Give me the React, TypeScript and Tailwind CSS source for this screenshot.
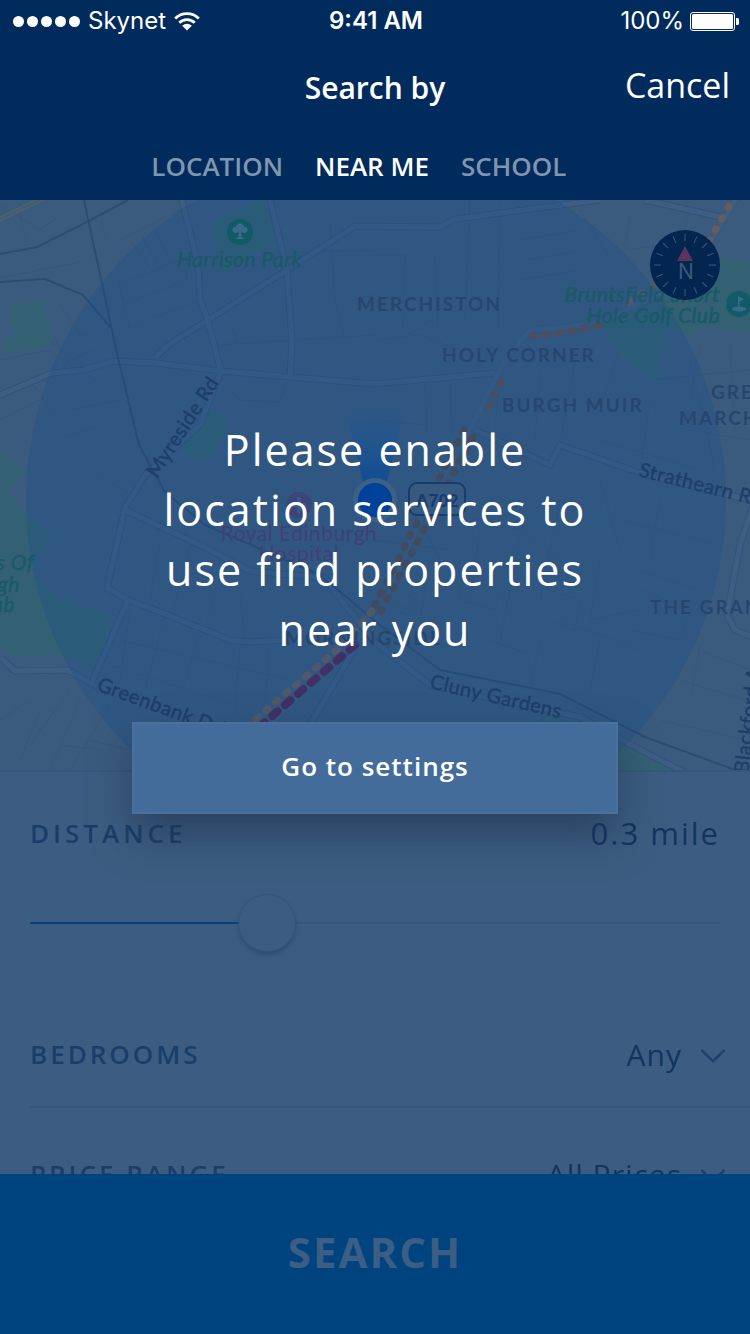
import React, { useState } from "react";

const ROADS = [
  "M182 200L198 265L200 300L207 318L221 371",
  "M0 395L52 373L83 370L115 361L155 363L221 371L290 377L375 384L495 373",
  "M155 358L168 345L208 320L287 270L355 226L440 227L455 219L600 200",
  "M270 200L287 270L292 342L290 377",
  "M221 371L200 425L145 475L125 508L107 588L128 600L92 682",
  "M125 510L200 545L250 571L325 578L345 605L375 642L430 685L500 700L580 717L650 755L690 775",
  "M128 600L160 612L230 640L248 642L290 640",
  "M0 657L15 671L68 670L92 684L110 692",
  "M475 430L550 465L560 445L640 473L750 500",
  "M645 200L725 218",
  "M755 500L740 545L727 615L735 630L755 638",
  "M355 648L310 725L285 770",
];

const MAIN_ROAD =
  "M738 196L702 255L655 297L600 322L560 328L530 330L505 360L472 425L420 520L378 618L255 740";

const RAILWAYS = [
  "M84 200L90 228L118 358L139 445L165 492L205 525L320 575L380 625L440 670L560 694L645 737L735 770",
  "M0 254L37 247L83 224L128 200",
  "M0 282L45 279L83 295L111 328",
];

const STREETS = [
  "M118 285L180 260M122 305L187 280M127 328L200 300M118 280L130 330M180 245L187 280M130 240L150 268M142 236L158 264M155 230L170 262",
  "M0 278L80 262M0 205L40 230L60 215M20 210L25 240M100 210L105 240M120 240L190 205M60 305L80 335L95 330M50 340L70 360L95 350",
  "M221 345L292 340M292 340L375 335M230 325L238 340L225 345M330 220L335 300L345 340M300 252L375 250M350 300L375 295",
  "M230 390L240 400L280 402L288 380M70 410L120 400M60 440L110 420M90 470L140 500M0 420L40 400M30 380L55 415",
  "M405 255L403 330M435 255L438 330M470 200L465 320M500 205L498 330M405 255L375 255M520 240L580 230M525 260L575 252M520 280L580 270",
  "M375 340L420 335L460 350M400 340L430 320L455 345M425 385L427 435M450 380L452 435M375 420L425 425",
  "M500 375L495 430L530 450M540 370L535 440M575 360L560 445M620 350L600 410L575 440M580 400L650 420M650 400L640 470M600 440L700 470M690 360L715 470",
  "M160 540L150 600M190 545L175 605M225 560L205 630M130 610L120 680M165 615L145 690M200 630L180 700M240 645L235 715M270 645L265 700M120 640L290 680M110 665L250 710",
  "M240 595L245 640M200 520L300 500M375 540L450 550M400 500L520 530L560 560M430 560L420 620M480 530L470 600M520 540L500 640M560 500L540 600M600 480L620 550",
  "M460 580L500 590L495 610L460 600ZM550 590L580 600L575 630L545 620M600 560L590 620L640 610M640 590L690 610L680 640L630 630M560 620L640 650M540 640L530 690",
  "M400 590L416 600L410 615L395 612M490 640L530 655M600 640L590 690M640 570L700 590M620 520L720 545M660 500L650 560M700 650L750 670M680 680L745 700M660 720L745 740M700 645L690 700",
  "M0 690L50 740M20 680L60 720M40 710L20 760M70 690L30 745M60 745L100 750M80 700L50 770M110 705L70 770M90 740L130 750M0 720L30 700",
  "M580 210L610 260M630 215L625 250L660 245M690 205L680 250M650 380L750 370M700 345L690 400M690 430L750 440M730 340L735 430",
  "M0 360L50 350L110 390M55 335L65 370M180 200L190 240M390 600L470 640M420 520L440 560",
];

const TICKS = Array.from({ length: 16 }, (_, i) => i * 22.5);

function CityMap() {
  return (
    <svg
      className="h-[570px] w-full"
      viewBox="0 200 750 570"
      preserveAspectRatio="xMidYMin slice"
      role="img"
      aria-label="Map of the area around you"
      fontFamily="Lato, sans-serif"
    >
      <defs>
        <linearGradient id="heading" x1="0" y1="0" x2="0" y2="1">
          <stop offset="0" stopColor="#1554a0" stopOpacity="0" />
          <stop offset="1" stopColor="#074a98" stopOpacity="0.8" />
        </linearGradient>
      </defs>
      <rect x="0" y="200" width="750" height="570" fill="#3b5b7e" />

      <g fill="none" stroke="#35567b" strokeWidth="1" opacity="0.7">
        {STREETS.map((d) => (
          <path key={d} d={d} />
        ))}
      </g>

      <g fill="#336173">
        <path d="M210 222L268 198L276 243L240 260L222 277Z" />
        <path d="M8 307L43 299L52 335L50 343L30 350L5 354L4 340L16 335Z" />
        <path d="M203 405L231 419L220 445L203 461L183 450Z" />
        <path d="M0 450L24 470L10 490L18 507L50 532L32 575L60 597L112 617L97 668L60 655L10 656L0 650Z" />
        <path d="M600 325L720 255L750 263L750 332L710 328L690 335L668 330L656 382L620 355Z" />
        <path d="M535 722L550 716L590 727L672 772L620 772Z" />
      </g>

      <g fill="none" strokeLinejoin="round">
        {ROADS.map((d) => (
          <path key={d} d={d} stroke="#33537a" strokeWidth="7" />
        ))}
        <path d={MAIN_ROAD} stroke="#3a5872" strokeWidth="7" />
        {ROADS.map((d) => (
          <path key={d} d={d} stroke="#3e5e84" strokeWidth="5" />
        ))}
        <path d={MAIN_ROAD} stroke="#3d5e84" strokeWidth="5" />
        <path d="M-2 220L48 196" stroke="#4d6464" strokeWidth="5" />
        <path d="M-2 220L48 196" stroke="#3f5d80" strokeWidth="2" />
        {RAILWAYS.map((d) => (
          <path key={d} d={d} stroke="#2d4c74" strokeWidth="2" />
        ))}
      </g>

      <circle cx="376" cy="500" r="350" fill="#145089" fillOpacity="0.28" />

      <g fill="none" strokeLinecap="round" strokeWidth="7">
        <path d="M729 206L709 241" stroke="#665b60" strokeDasharray="2 11" />
        <path d="M655 284L625 306" stroke="#54566a" strokeDasharray="2 13" />
        <path d="M532 336L560 333L602 325" stroke="#4b4e60" strokeDasharray="3 10" />
        <path d="M501 382L488 408" stroke="#4b4e60" strokeDasharray="2 11" />
        <path d="M464 430L372 611" stroke="#424b5e" strokeDasharray="2 11" />
        <path d="M473 437L376 620" stroke="#424b5e" strokeDasharray="2 11" />
        <path d="M372 611L346 642L250 724" stroke="#505869" strokeDasharray="3 10" />
        <path d="M355 645L264 723" stroke="#422f66" strokeWidth="8" strokeDasharray="7 10" />
      </g>

      <g fill="#27466f" fontSize="19" fontWeight="700" letterSpacing="2">
        <text x="357" y="311">MERCHISTON</text>
        <text x="442" y="362">HOLY CORNER</text>
        <text x="502" y="412">BURGH MUIR</text>
        <text x="711" y="399">GREEN</text>
        <text x="679" y="425">MARCHMONT</text>
        <text x="650" y="614">THE GRANGE</text>
        <text x="285" y="645">MORNINGSIDE</text>
      </g>
      <g fill="#1e3e69" stroke="#1e3e69" strokeWidth="0.4" fontSize="20" letterSpacing="0.5">
        <text transform="translate(157 479) rotate(-57)">Myreside Rd</text>
        <text transform="translate(96 690) rotate(20)">Greenbank Drive</text>
        <text transform="translate(638 476) rotate(14)">Strathearn Road</text>
        <text transform="translate(429 688) rotate(13)">Cluny Gardens</text>
        <text transform="translate(748 774) rotate(-83)">Blackford Ave</text>
      </g>
      <g fill="#195968" stroke="#195968" strokeWidth="0.5" fontSize="21" fontStyle="italic" letterSpacing="0.5">
        <text x="177" y="267">Harrison Park</text>
        <text x="720" y="302" textAnchor="end">Bruntsfield Short</text>
        <text x="720" y="323" textAnchor="end">Hole Golf Club</text>
        <text x="34" y="570" textAnchor="end">Merchants Of</text>
        <text x="20" y="592" textAnchor="end">Edinburgh</text>
        <text x="15" y="612" textAnchor="end">Golf Club</text>
      </g>
      <g fill="#423f74" fontSize="21" letterSpacing="0.5" textAnchor="middle">
        <text x="299" y="541">Royal Edinburgh</text>
        <text x="299" y="561">Hospital</text>
      </g>

      <circle cx="240" cy="232" r="13" fill="#135a68" />
      <g fill="#3c6a8a">
        <circle cx="240" cy="228" r="4.5" />
        <circle cx="235.500" cy="230" r="3" />
        <circle cx="244.500" cy="230" r="3" />
        <path d="M239 230h2l.5 7l3.500 2h-10l3.500-2z" />
      </g>

      <circle cx="739" cy="304" r="13" fill="#135a68" />
      <g fill="#3c6a8a">
        <ellipse cx="739" cy="309" rx="7" ry="2.500" />
        <path d="M738 296l6 3l-4.500 3v7h-1.500z" />
      </g>

      <circle cx="299" cy="505" r="13" fill="#3c447a" />
      <path d="M297 497h4v6h5v4h-5v6h-4v-6h-5v-4h5z" fill="#36588a" />

      <path d="M345 408Q375 398 405 408L386 486H364Z" fill="url(#heading)" />
      <circle cx="375" cy="500" r="22" fill="#3d6085" />
      <circle cx="375" cy="500" r="17" fill="#00429a" />

      <rect x="409" y="483" width="56" height="32" rx="8" fill="#38597f" stroke="#183c6f" strokeWidth="2" />
      <text
        x="437"
        y="507"
        textAnchor="middle"
        fontFamily="'Liberation Sans', sans-serif"
        fontSize="18"
        fontWeight="700"
        fill="#183c6f"
      >
        A702
      </text>
    </svg>
  );
}

function Compass() {
  return (
    <button type="button" aria-label="Point the map north" className="absolute top-[30px] right-[30px] size-[70px]">
      <svg viewBox="0 0 70 70" className="size-full">
        <circle cx="35" cy="35" r="35" fill="#02264f" />
        {TICKS.map((angle) => (
          <path key={angle} d="M35 4V11" stroke="#3b587e" transform={`rotate(${angle} 35 35)`} />
        ))}
        <path d="M35 16L43 31H27Z" fill="#5a345f" />
        <text x="36" y="49" textAnchor="middle" fontFamily="Inter, sans-serif" fontSize="21" fill="#3b587e">
          N
        </text>
      </svg>
    </button>
  );
}

function StatusBar() {
  return (
    <div className="grid h-[42px] grid-cols-[1fr_auto_1fr] items-center pr-[11px] pl-[13px] font-['Inter',sans-serif] text-[24px]">
      <div className="flex items-center">
        <div className="flex gap-[3px]">
          {[1, 2, 3, 4, 5].map((n) => (
            <span key={n} className="size-[11px] rounded-full bg-white" />
          ))}
        </div>
        <span className="ml-2">Skynet</span>
        <svg viewBox="0 0 26 19" className="ml-2 h-[19px] w-[26px]" role="img" aria-label="Wi-Fi">
          <path
            d="M1.200 6.500a16.700 16.700 0 0 1 23.600 0M5.300 10.800a10.900 10.900 0 0 1 15.400 0"
            fill="none"
            stroke="white"
            strokeWidth="2.900"
          />
          <path d="M8.200 13.700a6.800 6.800 0 0 1 9.600 0L13 18.500z" fill="white" />
        </svg>
      </div>
      <span className="font-semibold">9:41 AM</span>
      <div className="flex items-center justify-end gap-[6px]">
        <span>100%</span>
        <svg viewBox="0 0 49 19" className="h-[19px] w-[49px]" role="img" aria-label="Battery full">
          <rect x="0.500" y="0.500" width="44" height="18" rx="2.500" fill="none" stroke="white" />
          <rect x="2" y="2" width="41" height="15" rx="1.500" fill="white" />
          <path d="M46 6h1.500q1.500 0 1.500 1.500v4q0 1.500-1.500 1.500H46z" fill="white" />
        </svg>
      </div>
    </div>
  );
}

function Chevron() {
  return (
    <svg viewBox="0 0 26 18" className="pointer-events-none absolute right-6 h-[18px] w-[26px]" aria-hidden="true">
      <path d="M1.500 5L13 16.200L24.500 5" fill="none" stroke="#1f426c" strokeWidth="2.600" />
    </svg>
  );
}

function SelectRow({ id, label, option }: { id: string; label: string; option: string }) {
  return (
    <div className="ml-[30px] flex h-[120px] shrink-0 items-center justify-between border-b-2 border-[#35567d] pt-[14px]">
      <label htmlFor={id} className="text-[26px] font-semibold tracking-[3px] text-[#1a3e69]">
        {label}
      </label>
      <div className="relative flex items-center">
        <select
          id={id}
          className="appearance-none bg-transparent pr-[68px] text-right text-[30px] tracking-[1px] text-[#12345f]"
        >
          <option>{option}</option>
        </select>
        <Chevron />
      </div>
    </div>
  );
}

export default function App() {
  const [position, setPosition] = useState(33);
  const fill = `linear-gradient(to right, #00447f ${position}%, #35567d ${position}%)`;

  return (
    <div className="flex h-screen flex-col bg-[#3c5d81] font-['Open_Sans',sans-serif] text-white">
      <header className="flex h-[200px] shrink-0 flex-col bg-[#002b5c]">
        <StatusBar />
        <div className="grid h-[90px] grid-cols-[1fr_auto_1fr] items-center px-5">
          <h1 className="col-start-2 text-[30px] font-semibold">Search by</h1>
          <button type="button" className="justify-self-end pb-1 text-[34px]">
            Cancel
          </button>
        </div>
        <nav className="grid flex-1 grid-cols-[1fr_auto_1fr] items-center gap-8 pr-[6px] text-[26px] font-semibold">
          <a href="#location" className="justify-self-end text-[#8095ae]">
            LOCATION
          </a>
          <a href="#near-me" aria-current="page">
            NEAR ME
          </a>
          <a href="#school" className="justify-self-start text-[#8095ae]">
            SCHOOL
          </a>
        </nav>
      </header>

      <main className="relative flex min-h-0 flex-1 flex-col overflow-hidden">
        <section className="relative shrink-0 border-b-2 border-[#35567d]">
          <CityMap />
          <Compass />
        </section>

        <section className="flex h-[216px] shrink-0 flex-col px-[30px] pt-[38px]">
          <div className="flex items-center justify-between">
            <label htmlFor="distance" className="text-[26px] font-semibold tracking-[4px] text-[#1a3e69]">
              DISTANCE
            </label>
            <output htmlFor="distance" className="text-[31px] tracking-[2px] text-[#12345f]">
              0.3 mile
            </output>
          </div>
          <input
            id="distance"
            type="range"
            min={0}
            max={100}
            value={position}
            onChange={(event) => setPosition(Number(event.target.value))}
            style={{ backgroundImage: fill }}
            className="mt-[38px] h-14 w-full appearance-none bg-transparent bg-[length:100%_2px] bg-center bg-no-repeat [&::-webkit-slider-thumb]:size-14 [&::-webkit-slider-thumb]:appearance-none [&::-webkit-slider-thumb]:rounded-full [&::-webkit-slider-thumb]:bg-[#3c5d81] [&::-webkit-slider-thumb]:shadow-[0_0_1px_1px_#35567a,0_4px_5px_#2c4c73]"
          />
        </section>

        <SelectRow id="bedrooms" label="BEDROOMS" option="Any" />
        <SelectRow id="price" label="PRICE RANGE" option="All Prices" />

        <div
          role="dialog"
          aria-label="Location services"
          className="absolute inset-0 flex flex-col items-center pt-[220px]"
        >
          <p className="w-[440px] text-center text-[43px] leading-[60px] tracking-[2px]">
            Please enable location services to use find properties near you
          </p>
          <button
            type="button"
            className="mt-[62px] h-[92px] w-[486px] border-2 border-[#4a719e] bg-[#446c9b] pb-1 text-[26px] font-semibold tracking-[1px] shadow-[0_20px_40px_rgba(30,50,75,0.6)]"
          >
            Go to settings
          </button>
        </div>
      </main>

      <button
        type="button"
        className="h-40 shrink-0 bg-[#00447f] pb-[6px] text-[42px] font-bold tracking-[2px] text-[#3c5d84]"
      >
        SEARCH
      </button>
    </div>
  );
}
